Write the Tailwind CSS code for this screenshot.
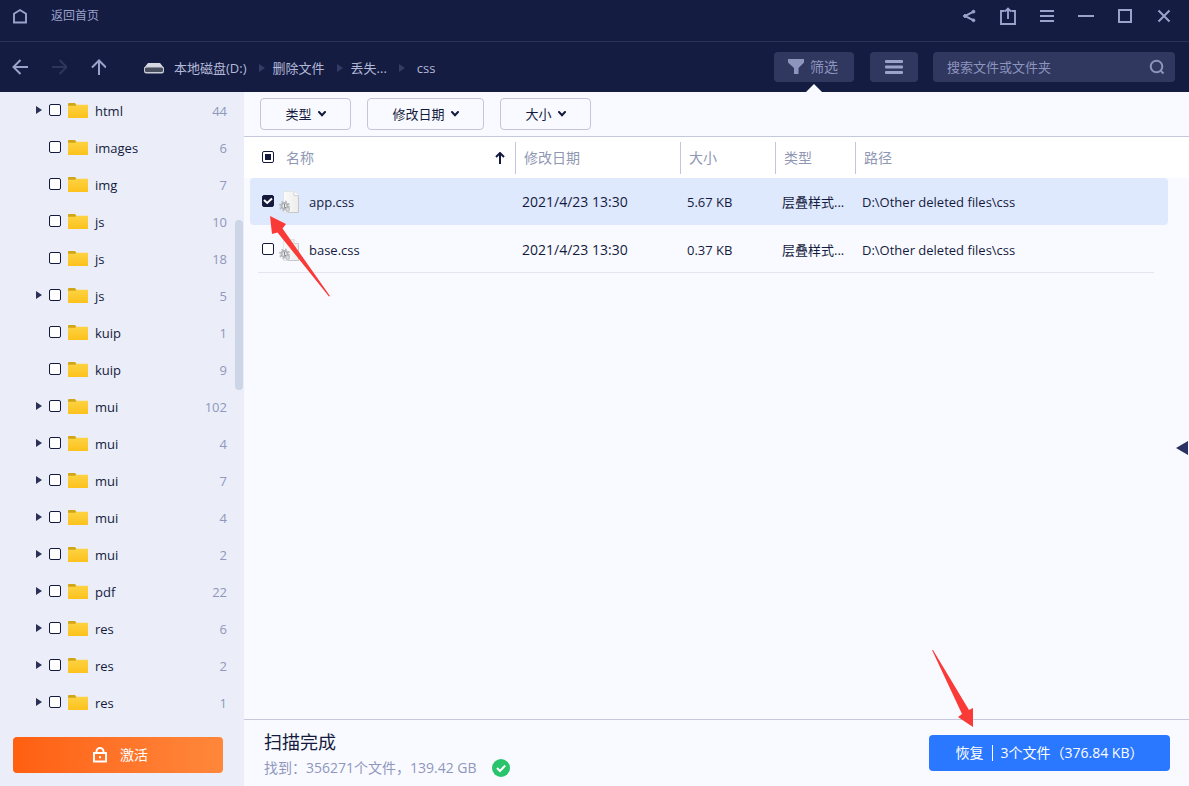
<!DOCTYPE html>
<html lang="zh-CN">
<head>
<meta charset="utf-8">
<meta name="viewport" content="width=device-width, initial-scale=1">
<title>css</title>
<script src="https://cdn.jsdelivr.net/npm/@tailwindcss/browser@4"></script>
</head>
<body class="relative flex h-screen flex-col overflow-hidden bg-[#f9faff] font-['Open_Sans','Noto_Sans_CJK_SC',sans-serif] text-[13px] leading-5 text-[#141a3e]">
<svg class="absolute h-0 w-0" aria-hidden="true">
  <defs>
    <linearGradient id="fold" x1="0" y1="0" x2="0" y2="1"><stop offset="0" stop-color="#fdd243"/><stop offset="1" stop-color="#fcc21c"/></linearGradient>
    <symbol id="folder" viewBox="0 0 20 16"><path d="M0 3V1Q0 0 1 0H7L8.500 2V4H0Z" fill="#cfa616"/><path d="M0 2.800H7L8.500 1.800H20V14.500Q20 15 19.500 15H.5Q0 15 0 14.500Z" fill="url(#fold)"/></symbol>
    <symbol id="tri" viewBox="0 0 6 8"><path d="M0 0L6 4L0 8Z" fill="currentColor"/></symbol>
    <symbol id="chev" viewBox="0 0 8 6"><path d="M1 1L4 4.200L7 1" fill="none" stroke="currentColor" stroke-width="2" stroke-linecap="round"/></symbol>
    <linearGradient id="sheet" x1="0" y1="0" x2="1" y2="0"><stop offset="0" stop-color="#fbfbfa"/><stop offset="1" stop-color="#ecedea"/></linearGradient>
    <symbol id="cssfile" viewBox="0 0 20 22"><path d="M4.500 .5H15L19.500 4V21.500H4.500Z" fill="url(#sheet)" stroke="#e2e4e6"/><path d="M15 .5V4.500H19.500" fill="#fff" stroke="#d0d3d7"/><path d="M19.500 5V21.500H9" fill="none" stroke="#c4c8ce"/><circle cx="5.500" cy="15" r="4.600" fill="none" stroke="#b9bdc2" stroke-width="1.800" stroke-dasharray="1.800 1.810"/><circle cx="5.500" cy="15" r="3" fill="#e9ebed" stroke="#b1b5ba" stroke-width="1.800"/><circle cx="8.500" cy="18.500" r="2" fill="#d8dadd" stroke="#b4b7bc"/><path d="M5.500 13V16.500H7" fill="none" stroke="#878b91"/></symbol>
  </defs>
</svg>

<header class="shrink-0 bg-[#141c42] text-[#9ba2cb]">
  <div class="flex h-[42px] items-center border-b border-[#2b3258] pb-[9px] pl-3 pr-[17px]">
    <a href="#" class="flex items-center gap-[23px] text-xs">
      <svg class="h-4 w-4" viewBox="0 0 16 16" fill="none" stroke="currentColor" stroke-width="1.900"><path d="M2 14.500V5.800L8 2L14 5.800V14.500Z"/></svg>
      <span>返回首页</span>
    </a>
    <div class="ml-auto flex items-center gap-[23px]">
      <button aria-label="分享"><svg class="h-4 w-4" viewBox="0 0 16 16" stroke="currentColor" fill="currentColor"><path d="M12.500 3.700L4 8L12.500 12.300" fill="none" stroke-width="2"/><circle cx="12.500" cy="3.700" r="1.400"/><circle cx="4" cy="8" r="1.400"/><circle cx="12.500" cy="12.300" r="1.400"/></svg></button>
      <button aria-label="导出"><svg class="h-[18px] w-4" viewBox="0 0 16 18" fill="none" stroke="currentColor" stroke-width="1.900"><path d="M4.500 4H1V17H15V4H11.500M8 12V2M5 4.500L8 1.500L11 4.500"/></svg></button>
      <button aria-label="菜单"><svg class="h-4 w-4" viewBox="0 0 16 16" stroke="currentColor" stroke-width="2"><path d="M1 3H15M1 8H15M1 13H15"/></svg></button>
      <button aria-label="最小化"><svg class="h-4 w-4" viewBox="0 0 16 16" stroke="currentColor" stroke-width="2"><path d="M0 8H16"/></svg></button>
      <button aria-label="最大化"><svg class="h-4 w-4" viewBox="0 0 16 16" fill="none" stroke="currentColor" stroke-width="2"><path d="M2 2H14V14H2Z"/></svg></button>
      <button aria-label="关闭"><svg class="h-4 w-4" viewBox="0 0 16 16" stroke="currentColor" stroke-width="2"><path d="M2.500 2.500L13.500 13.500M13.500 2.500L2.500 13.500"/></svg></button>
    </div>
  </div>
  <div class="flex h-[50px] items-center pl-3 pr-[14px]">
    <div class="flex gap-[23px]">
      <button aria-label="后退"><svg class="h-4 w-4" viewBox="0 0 16 16" fill="none" stroke="currentColor" stroke-width="2"><path d="M16 8H2M8.500 1L1.500 8L8.500 15"/></svg></button>
      <button aria-label="前进" class="text-[#2f365d]"><svg class="h-4 w-4" viewBox="0 0 16 16" fill="none" stroke="currentColor" stroke-width="2"><path d="M1 8H15M8.500 1L15.500 8L8.500 15"/></svg></button>
      <button aria-label="上一级"><svg class="h-4 w-4" viewBox="0 0 16 16" fill="none" stroke="currentColor" stroke-width="2"><path d="M9 16V2M2 8.500L9 1.500L16 8.500"/></svg></button>
    </div>
    <nav class="ml-[38px] flex items-center pt-px text-[#b3b9d6]">
      <svg class="mr-[10px] h-3 w-5" viewBox="0 0 20 12"><path d="M4 1H16L20 6H0Z" fill="#d5d8e2"/><rect y="4.500" width="20" height="7" rx="2.500" fill="#c9ccd6"/><rect x="1" y="5.500" width="18" height="4.500" rx="1.500" fill="#4a4f60"/></svg>
      <a href="#">本地磁盘(D:)</a>
      <svg class="ml-3 mr-2 h-2 w-[6px] text-[#343c66]"><use href="#tri"/></svg>
      <a href="#">删除文件</a>
      <svg class="ml-3 mr-2 h-2 w-[6px] text-[#343c66]"><use href="#tri"/></svg>
      <a href="#">丢失...</a>
      <svg class="ml-3 mr-3 h-2 w-[6px] text-[#343c66]"><use href="#tri"/></svg>
      <a href="#">css</a>
    </nav>
    <div class="ml-auto flex gap-4">
      <button class="relative flex h-[30px] w-20 items-center justify-center gap-[6px] rounded-sm bg-[#303860] pr-[2px] text-sm text-[#8d94be]">
        <svg class="h-4 w-4" viewBox="0 0 16 16" fill="currentColor"><path d="M0 0H16V3.500L10.500 9V15H6V9L0 3.500Z"/></svg>
        <span>筛选</span>
        <svg class="absolute left-8 top-8 h-2 w-4" viewBox="0 0 16 8" fill="#f9faff"><path d="M8 0L16 8H0Z"/></svg>
      </button>
      <button aria-label="视图" class="grid h-[30px] w-12 place-items-center rounded-sm bg-[#303860]"><svg class="h-[14px] w-[18px]" viewBox="0 0 18 14" fill="currentColor"><rect width="18" height="3" rx="1"/><rect y="5.500" width="18" height="3" rx="1"/><rect y="11" width="18" height="3" rx="1"/></svg></button>
      <label class="-ml-px flex h-[30px] w-[242px] items-center rounded-sm bg-[#303860] pl-[14px] pr-[10px]">
        <input type="text" aria-label="搜索" placeholder="搜索文件或文件夹" class="min-w-0 flex-1 bg-transparent outline-none placeholder:text-[#8d94be]">
        <svg class="h-4 w-4" viewBox="0 0 16 16" fill="none" stroke="#8d94be" stroke-width="2"><circle cx="7.500" cy="7.500" r="5.800"/><path d="M11.500 11.500L14.500 14.500"/></svg>
      </label>
    </div>
  </div>
</header>

<div class="flex min-h-0 flex-1">
  <aside class="relative flex w-[244px] shrink-0 flex-col bg-[#ebeef8]">
    <ul id="tree" class="min-h-0 flex-1 overflow-hidden"></ul>
    <div class="absolute right-px top-32 h-[170px] w-2 rounded-full bg-[#ccd6e6]"></div>
    <div class="shrink-0 pb-[13px] pl-[13px] pr-[21px]">
      <button class="flex h-9 w-full items-center justify-center gap-3 rounded bg-linear-to-r from-[#ff5f0f] to-[#ff873a] pl-1 text-sm text-white">
        <svg class="h-4 w-4" viewBox="0 0 16 16" fill="none" stroke="currentColor" stroke-width="1.900"><path d="M2 6H14V14.500H2ZM4.500 6V4.500A3.500 3.500 0 0 1 11.500 4.500V6"/><path d="M7 10.300H9"/></svg>
        <span>激活</span>
      </button>
    </div>
  </aside>

  <main class="relative flex min-w-0 flex-1 flex-col">
    <div class="flex h-[45px] shrink-0 gap-4 border-b border-[#c6c9dc] px-4 pt-[6px]">
      <button class="flex h-8 w-[91px] items-center justify-center gap-[6px] rounded border border-[#c3c6da]">类型<svg class="h-[6px] w-2"><use href="#chev"/></svg></button>
      <button class="flex h-8 w-[117px] items-center justify-center gap-[6px] rounded border border-[#c3c6da]">修改日期<svg class="h-[6px] w-2"><use href="#chev"/></svg></button>
      <button class="flex h-8 w-[91px] items-center justify-center gap-[6px] rounded border border-[#c3c6da]">大小<svg class="h-[6px] w-2"><use href="#chev"/></svg></button>
    </div>
    <div class="min-h-0 flex-1 bg-linear-[#fff_41px,#f9faff_41px] pl-[6px] pr-[21px]">
      <table class="w-full table-fixed border-separate border-spacing-0 text-left">
        <colgroup><col class="w-[265px]"><col class="w-[165px]"><col class="w-[95px]"><col class="w-[80px]"><col></colgroup>
        <thead class="text-sm text-[#8f97b3]">
          <tr class="h-[41px]">
            <th class="p-0 font-normal">
              <div class="flex items-center pl-3 pr-[10px]">
                <span class="mb-[2px] grid"><input type="checkbox" aria-label="全选" class="col-start-1 row-start-1 h-3 w-3 appearance-none rounded-[2px] border border-[#141a3e] bg-white"><svg class="pointer-events-none col-start-1 row-start-1 h-3 w-3" viewBox="0 0 12 12"><path d="M3 3H9V9H3Z" fill="#141a3e"/></svg></span>
                <span class="pl-3">名称</span>
                <svg class="ml-auto h-3 w-[10px]" viewBox="0 0 10 12" fill="none" stroke="#141a3e" stroke-width="2"><path d="M5 12V2M1 5L5 1L9 5"/></svg>
              </div>
            </th>
            <th class="p-0 font-normal"><div class="flex h-8 items-center border-l border-[#c3c6da] pl-2">修改日期</div></th>
            <th class="p-0 font-normal"><div class="flex h-8 items-center border-l border-[#c3c6da] pl-2">大小</div></th>
            <th class="p-0 font-normal"><div class="flex h-8 items-center border-l border-[#c3c6da] pl-2">类型</div></th>
            <th class="p-0 font-normal"><div class="flex h-8 items-center border-l border-[#c3c6da] pl-2">路径</div></th>
          </tr>
        </thead>
        <tbody>
          <tr class="h-[47px]">
            <td class="rounded-l bg-[#dfe9fd] p-0"><label class="flex items-center pl-3"><span class="mb-[2px] grid"><input type="checkbox" checked class="col-start-1 row-start-1 h-3 w-3 appearance-none rounded-[2px] border border-[#141a3e] bg-[#141a3e]"><svg class="pointer-events-none col-start-1 row-start-1 h-3 w-3" viewBox="0 0 12 12"><path d="M2 5L5.200 8L10 3.500" fill="none" stroke="#fff" stroke-width="2"/></svg></span><svg class="ml-[5px] mr-[10px] h-[22px] w-5"><use href="#cssfile"/></svg>app.css</label></td>
            <td class="bg-[#dfe9fd] p-0 pl-[7px] text-sm">2021/4/23 13:30</td>
            <td class="bg-[#dfe9fd] p-0 pl-[7px]">5.67 KB</td>
            <td class="bg-[#dfe9fd] p-0 pl-[7px]">层叠样式...</td>
            <td class="rounded-r bg-[#dfe9fd] p-0 pl-[7px]">D:\Other deleted files\css</td>
          </tr>
          <tr class="h-12">
            <td class="p-0 pt-[2px]"><label class="flex items-center pl-3"><input type="checkbox" class="mb-[2px] h-3 w-3 appearance-none rounded-[2px] border border-[#141a3e] bg-white"><svg class="ml-[5px] mr-[10px] h-[22px] w-5"><use href="#cssfile"/></svg>base.css</label></td>
            <td class="p-0 pl-[7px] pt-[2px] text-sm">2021/4/23 13:30</td>
            <td class="p-0 pl-[7px] pt-[2px]">0.37 KB</td>
            <td class="p-0 pl-[7px] pt-[2px]">层叠样式...</td>
            <td class="p-0 pl-[7px] pt-[2px]">D:\Other deleted files\css</td>
          </tr>
        </tbody>
      </table>
      <div class="-mt-px ml-2 mr-[14px] h-px bg-[#e3e6f0]"></div>
    </div>
    <button aria-label="展开预览" class="absolute right-px top-[349px]"><svg class="h-[14px] w-3" viewBox="0 0 12 14"><path d="M12 0V14L0 7Z" fill="#2a3263"/></svg></button>
    <svg class="pointer-events-none absolute left-[26px] top-[124px] h-[81px] w-[60px]" viewBox="0 0 60 81"><path d="M0 0L16 8L12.500 12.500L60 80L59 80.500L7.500 16.500L2 18Z" fill="#f93a37"/></svg>

    <footer class="relative flex h-[67px] shrink-0 items-center justify-between border-t border-[#c6c9dc] pl-5 pr-[19px]">
      <div class="pt-[2px]">
        <h1 class="text-lg leading-6">扫描完成</h1>
        <p class="flex items-center gap-[15px] pt-1 text-sm leading-5 text-[#8f97bd]"><span>找到：356271个文件，139.42 GB</span>
          <svg class="h-[18px] w-[18px]" viewBox="0 0 18 18"><circle cx="9" cy="9" r="9" fill="#27c46b"/><path d="M5 9L8 12L13.200 6.500" fill="none" stroke="#fff" stroke-width="2"/></svg></p>
      </div>
      <button class="flex h-9 w-[241px] items-center justify-center gap-2 rounded bg-[#2a78ff] text-sm text-white"><span>恢复</span><span class="h-4 w-px bg-white"></span><span>3个文件（376.84 KB）</span></button>
      <svg class="pointer-events-none absolute bottom-[59px] right-[215px] h-[77px] w-[42px]" viewBox="0 0 42 77"><path d="M0 0L1 0L37 60L41 58L41 77L26 67L30 64Z" fill="#f93a37"/></svg>
    </footer>
  </main>
</div>
<script>
const folders = [['html',44,1],['images',6,0],['img',7,0],['js',10,0],['js',18,0],['js',5,1],['kuip',1,0],['kuip',9,0],['mui',102,1],['mui',4,1],['mui',7,1],['mui',4,1],['mui',2,1],['pdf',22,1],['res',6,1],['res',2,1],['res',1,1]];
document.getElementById('tree').innerHTML = folders.map(([name, count, open]) => `
<li class="flex h-[37px] items-center pl-9 pr-[17px]">
  <svg class="mb-[2px] h-2 w-[6px] text-[#2b3056] ${open ? '' : 'invisible'}"><use href="#tri"/></svg>
  <label class="flex flex-1 items-center pl-[7px]"><input type="checkbox" class="mb-[2px] h-3 w-3 appearance-none rounded-[2px] border border-[#141a3e] bg-white"><svg class="mx-[7px] h-4 w-5"><use href="#folder"/></svg><span>${name}</span></label>
  <span class="text-[#8f97bd]">${count}</span>
</li>`).join('');
</script>
</body>
</html>
